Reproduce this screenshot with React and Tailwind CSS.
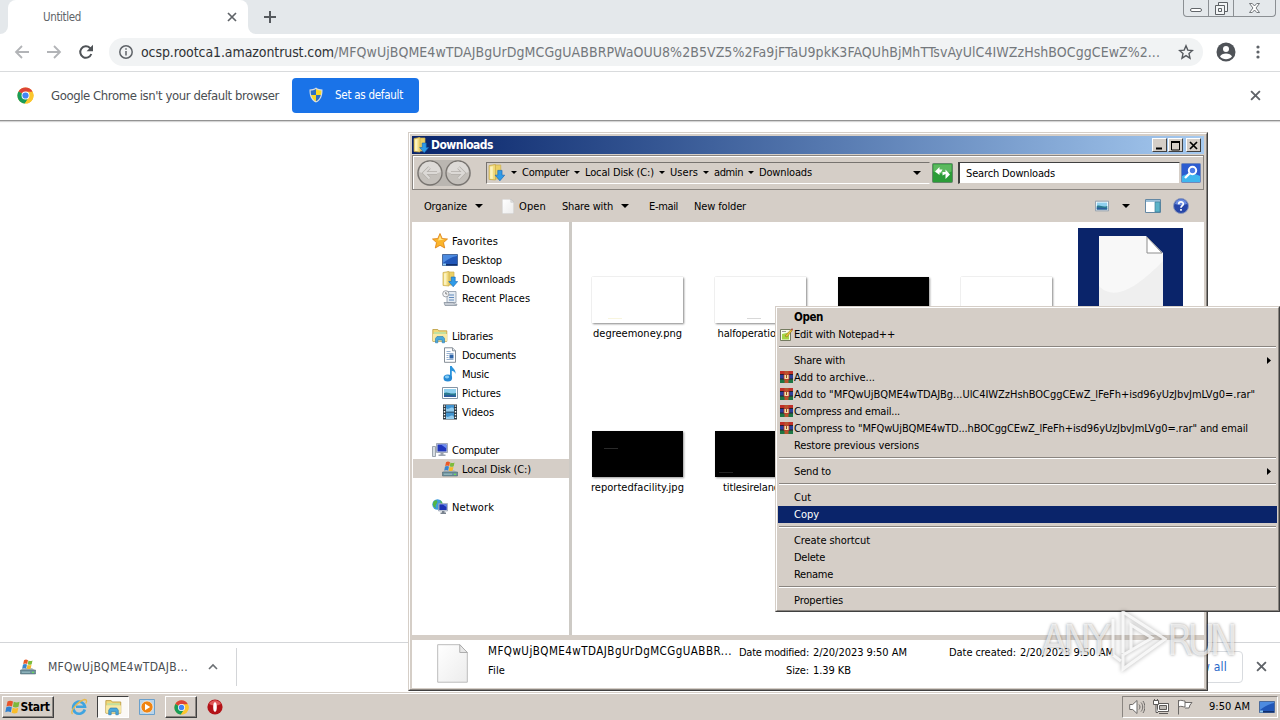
import React, { useLayoutEffect, useRef, useState } from 'react';
import clsx from 'clsx';

// Text that keeps a fixed width: the spare room is spread over the letters
const Label = ({ w, className, children }) => {
  const ref = useRef(null);
  const [spacing, setSpacing] = useState(0);

  useLayoutEffect(() => {
    const range = document.createRange();
    range.selectNodeContents(ref.current);
    const natural = range.getBoundingClientRect().width;
    setSpacing((w - natural) / String(children).length);
  }, []);

  return (
    <span
      ref={ref}
      className={clsx('block shrink-0 whitespace-nowrap', className)}
      style={{ letterSpacing: spacing, width: w }}
    >
      {children}
    </span>
  );
};

const CloseIcon = ({ className }) => (
  <svg viewBox="0 0 10 10" className={className}>
    <path d="M1 1l8 8M9 1L1 9" stroke="#5f6368" strokeWidth="1.7" fill="none" />
  </svg>
);

const ChromeIcon = ({ className }) => (
  <svg viewBox="0 0 18 18" className={className}>
    <circle cx="9" cy="9" r="8.5" fill="#fbc62d" />
    <path d="M9 9L1.6 4.7A8.5 8.5 0 0 1 16.4 4.8z" fill="#dc4437" />
    <path d="M9 9L1.6 4.7A8.5 8.5 0 0 0 8.3 17.5L12.5 11z" fill="#189c58" />
    <path d="M9 5h7.5A8.5 8.5 0 0 1 8.4 17.5L12.5 11z" fill="#fbc62d" />
    <circle cx="9" cy="9" r="4.2" fill="#fff" />
    <circle cx="9" cy="9" r="3.3" fill="#4285f4" />
  </svg>
);

const ShieldIcon = () => (
  <svg viewBox="0 0 16 16" className="size-4">
    <path d="M8 .5C6 2 4 2.4 1.5 2.4 1.3 8.5 3 13 8 15.6 13 13 14.7 8.5 14.5 2.4 12 2.4 10 2 8 .5z" fill="#d7dde2" />
    <path d="M8 2C6 3 4.5 3.5 2.7 3.5c0 1.800 0 3 .5 4.500H8z" fill="#2c6fc4" />
    <path d="M8 2c2 1 3.500 1.500 5.300 1.500 0 1.800 0 3-.5 4.500H8z" fill="#f9d825" />
    <path d="M3.200 8H8v6.300C5.500 13 4 11 3.200 8z" fill="#f9d825" />
    <path d="M12.800 8H8v6.300c2.500-1.300 4-3.300 4.800-6.300z" fill="#2c6fc4" />
  </svg>
);

const FolderDownIcon = ({ className }) => (
  <svg viewBox="0 0 16 16" className={className}>
    <path d="M5 1h7v13H5z" fill="#ecd064" stroke="#cdb050" strokeWidth=".7" />
    <path d="M1 1.500l6-1v14.500l-6-.5z" fill="#f2db7c" stroke="#c8a94a" strokeWidth=".7" />
    <path d="M2 2.500l2.500-.5v12l-2.500-.2z" fill="#fbf2bd" />
    <path d="M9.200 6h4v4.500h2.500L11.200 15.800 6.700 10.500h2.500z" fill="#2f9be8" stroke="#1667b5" strokeWidth=".6" />
  </svg>
);

const StarIcon = () => (
  <svg viewBox="0 0 16 16" className="size-4">
    <path d="M8 .5l2.200 5 5.300.5-4 3.600 1.200 5.400L8 12.300 3.300 15l1.200-5.400-4-3.600 5.300-.5z" fill="#fbb52b" stroke="#dc7d12" strokeWidth=".8" />
    <path d="M8 2.500l1.400 3.600 3 .4-6.400 1z" fill="#ffe58a" />
  </svg>
);

const DesktopIcon = ({ className = 'size-4' }) => (
  <svg viewBox="0 0 16 16" className={className}>
    <path d="M.5 2.500h15v11H.5z" fill="#2157b8" stroke="#4a6a9c" />
    <path d="M1 3h14v1C9 5 5 8 1 11z" fill="#4d8be0" />
    <path d="M1 12h14v1.500H1z" fill="#0f2f6e" />
    <path d="M1 11.500h3v2H1z" fill="#8cc8f0" />
  </svg>
);

const RecentIcon = () => (
  <svg viewBox="0 0 16 16" className="size-4">
    <path d="M5 1.500h9v11H5z" fill="#e4ebf2" stroke="#8c98a6" strokeWidth=".8" />
    <path d="M2 12.500h9.500l1 1.500 2.500.2-.5 1.300H3z" fill="#c6ccd4" stroke="#808a96" strokeWidth=".7" />
    <path d="M7 5h5M7 7.500h5M7 10h5" stroke="#5f88bb" />
    <circle cx="3.800" cy="3.800" r="3.100" fill="#f5f6f8" stroke="#8c8f96" strokeWidth=".8" />
    <path d="M3.800 2v2h1.500" stroke="#555" strokeWidth=".7" fill="none" />
  </svg>
);

const LibrariesIcon = ({ className = 'size-4' }) => (
  <svg viewBox="0 0 16 16" className={className}>
    <path d="M.8 1.500h5l1 1.300h8v10.500H.8z" fill="#f1d878" stroke="#b99a3d" strokeWidth=".8" />
    <path d="M2 4h12v2H2z" fill="#c3e0a0" />
    <path d="M1 6h14v7H1z" fill="#f8e9a4" />
    <path d="M3.500 14.800V10.500l1.500-2h6l1.500 2v4.300h-2.300V12H5.800v2.800z" fill="#49a8dc" stroke="#2578ae" strokeWidth=".6" />
  </svg>
);

const DocumentsIcon = () => (
  <svg viewBox="0 0 16 16" className="size-4">
    <path d="M2.500.8h8l3 3v11.500h-11z" fill="#fff" stroke="#77808a" strokeWidth=".9" />
    <path d="M10.500.8v3h3" fill="#dde3ea" stroke="#77808a" strokeWidth=".8" />
    <path d="M4.500 4.500h4M4.500 6.500h7M4.500 8.500h2M4.500 10.500h2M4.500 12.500h7" stroke="#7a9cc4" strokeWidth=".8" />
    <path d="M7.500 7.500h4v4h-4z" fill="#2f64a8" />
  </svg>
);

const MusicIcon = () => (
  <svg viewBox="0 0 16 16" className="size-4">
    <path d="M8 0h1.800c.3 2.500 4.300 3 3.700 8-.6-2-1.700-2.800-3.700-3.200v7.500H8z" fill="#2b94dc" />
    <ellipse cx="5.800" cy="12" rx="4.300" ry="3.500" fill="#2689d4" />
    <ellipse cx="5" cy="11" rx="2.200" ry="1.400" fill="#85ccf5" />
  </svg>
);

const PictureIcon = ({ className = 'size-4' }) => (
  <svg viewBox="0 0 16 16" className={className}>
    <path d="M.5 2.500h15v11H.5z" fill="#fff" stroke="#8495a5" />
    <path d="M2 4h12v8H2z" fill="#8fd0ee" />
    <path d="M2 8c4-2 6 2 12 0v4H2z" fill="#2a7b8f" />
    <path d="M2 9.800c4 .5 8-.5 12 1V12H2z" fill="#2c5c9c" />
  </svg>
);

const VideosIcon = () => (
  <svg viewBox="0 0 16 16" className="size-4">
    <path d="M1 .5h14v15H1z" fill="#2c3942" />
    <path d="M4 1h8v6.500H4zM4 8.500h8V15H4z" fill="#4093cf" />
    <path d="M4 4c3 3 5-3 8 1v2.500H4zM4 12c3 3 5-3 8 1v2H4z" fill="#95cdee" />
    <path d="M2.500 1.500v14M13.500 1.500v14" stroke="#fff" strokeWidth="1.400" strokeDasharray="1.300 1.500" />
  </svg>
);

const ComputerIcon = () => (
  <svg viewBox="0 0 16 16" className="size-4">
    <path d="M.5 4.500h3v10h-3z" fill="#d7dde2" stroke="#89929c" strokeWidth=".8" />
    <path d="M4.500 1.500h11v9h-11z" fill="#d6dbe4" stroke="#9098a8" strokeWidth=".8" />
    <path d="M5.500 2.500h9v7h-9z" fill="#1f36bd" />
    <path d="M9 2.500h5.500v4z" fill="#6d8df0" />
    <path d="M8.500 10.500h3v2h2v1.500h-7v-1.500h2z" fill="#9aa2ae" />
  </svg>
);

const DiskIcon = ({ className = 'size-4' }) => (
  <svg viewBox="0 0 16 16" className={className}>
    <path d="M2.500 9h9.500l3.500 3H.5z" fill="#b5bcc2" />
    <path d="M.5 11h15v4H.5z" fill="#6f939e" stroke="#3e5963" strokeWidth=".5" />
    <path d="M2 13.200h8" stroke="#a6cbd2" strokeWidth=".8" />
    <path d="M12 12.700h2v1.300h-2z" fill="#6adf58" />
    <path d="M4 1.200c1.500-.9 2.700-.7 4 0L7.200 5c-1.300-.7-2.500-.8-4 0z" fill="#ea5a27" />
    <path d="M8.500 1.400c1.400.7 2.500.7 4 0l-.8 3.800c-1.500.8-2.600.7-4 0z" fill="#7dbb3c" />
    <path d="M3 5.500c1.500-.8 2.700-.7 4 0l-.8 4c-1.300-.8-2.500-.8-4 0z" fill="#3886cf" />
    <path d="M7.500 5.700c1.400.7 2.500.7 4 0l-.8 3.800c-1.500.8-2.600.7-4 0z" fill="#f7b92c" />
  </svg>
);

const NetworkIcon = () => (
  <svg viewBox="0 0 16 16" className="size-4">
    <circle cx="5.500" cy="5.500" r="5.200" fill="#3d9bdc" />
    <path d="M2 2c3-2 4 0 3 2S3 6 4 9C1 8 0 5 2 2zM8 1c3 2 3 5 1 4z" fill="#53b545" />
    <path d="M6.500 4.500h9v7.500h-9z" fill="#cfd6e2" stroke="#8892a6" strokeWidth=".6" />
    <path d="M7.300 5.300h7.400v5.700H7.300z" fill="#1c33b4" />
    <path d="M10.500 5.300h4.200v3z" fill="#6383e8" />
    <path d="M10 12h2.500v1.500H14V15H8.500v-1.500H10z" fill="#78828e" />
  </svg>
);

const PageIcon = ({ className }) => (
  <svg viewBox="0 0 32 40" preserveAspectRatio="none" className={className}>
    <defs>
      <linearGradient id="page" x1="0" y1="0" x2="1" y2="1">
        <stop offset="0" stopColor="#fff" />
        <stop offset="1" stopColor="#ececec" />
      </linearGradient>
    </defs>
    <path d="M.7.7h22.800l7.800 8v30.500H.7z" fill="url(#page)" stroke="#bbb" />
    <path d="M23.500.7v8h7.800z" fill="#e8e8e8" stroke="#aaa" />
  </svg>
);

// Large variant used for the thumbnail, with the corner folded in
const LargePageIcon = () => (
  <svg viewBox="0 0 66 87" className="h-[87px] w-[66px]">
    <path d="M1 0h47l17 17v70H1z" fill="#f8f8f8" />
    <path d="M1 50C20 70 50 40 65 25v62H1z" fill="#efefef" />
    <path d="M49 1l15 16H49z" fill="#fff" stroke="#8d8d8d" />
  </svg>
);

const RarIcon = () => (
  <svg viewBox="0 0 13 12" className="-mt-px h-3 w-[13px]">
    <path d="M0 0h13v4H0z" fill="#c03028" />
    <path d="M0 4h13v4H0z" fill="#2b3e98" />
    <path d="M0 8h13v4H0z" fill="#1d7644" />
    <path d="M0 3.500h13M0 8h13" stroke="#24222e" />
    <path d="M4.500 0h4v12h-4z" fill="#b8542c" />
    <path d="M4 3.500h5v5H4z" fill="#f3dfa9" stroke="#b42b22" strokeWidth=".8" />
    <path d="M6.500 4v3" stroke="#93511b" />
  </svg>
);

const NotepadIcon = () => (
  <svg viewBox="0 0 13 13" className="size-[13px]">
    <path d="M.5 1.500h10v11H.5z" fill="#f8fbec" stroke="#747b60" />
    <path d="M2 6l7-1.500v7H2z" fill="#a6d545" />
    <path d="M2 3.500h4" stroke="#999" />
    <path d="M5 8l6-6.500 1.300 1L7 9z" fill="#e9c43b" stroke="#87661a" strokeWidth=".5" />
    <path d="M11 1.500l1-1.200 1 1-.9 1.200z" fill="#a5302a" />
  </svg>
);

const WindowsFlag = () => (
  <svg viewBox="0 0 16 16" className="size-4">
    <path d="M2.500 2.500C4.500 1.200 6 1.500 8 2.500L7 7.500c-2-1-3.500-1-5.500 0z" fill="#e8542a" />
    <path d="M8.800 2.800c2 1 3.700 1 5.700 0l-1 5c-2 1-3.700 1-5.600 0z" fill="#7cb83c" />
    <path d="M1.300 8.300c2-1 3.500-1 5.500 0l-1 5c-2-1-3.500-1-5.500 0z" fill="#2f80d0" />
    <path d="M7.700 8.700c2 1 3.600 1 5.600 0l-1 5c-2 1-3.700 1-5.600 0z" fill="#f9bd2b" />
  </svg>
);

const Caret = ({ className }) => (
  <svg viewBox="0 0 8 4" className={clsx('shrink-0', className)}>
    <path d="M0 0h8L4 4z" />
  </svg>
);

const BrowserTop = () => (
  <header className="shrink-0">
    <div className="flex h-[34px] items-start bg-[#e4e8eb]">
      <div className="flex h-[34px] w-2 shrink-0 items-end bg-white">
        <div className="h-full w-full rounded-br-lg bg-[#e4e8eb]" />
      </div>
      <div className="flex h-[34px] w-[240px] items-center rounded-t-lg bg-white pl-[35px]">
        <Label w={38} className="text-[11.5px] text-[#606468]">Untitled</Label>
        <CloseIcon className="ml-[146px] size-[10px]" />
      </div>
      <div className="flex h-[34px] w-2 shrink-0 bg-white">
        <div className="h-full w-full rounded-bl-lg bg-[#e4e8eb]" />
      </div>
      <svg viewBox="0 0 12 12" className="ml-2 mt-[11px] size-3">
        <path d="M6 0v12M0 6h12" stroke="#55595e" strokeWidth="2" />
      </svg>
      <div className="ml-auto mr-1 flex h-[17px] w-[93px] rounded-b-[4px] border border-t-0 border-[#8b8f93]">
        <div className="flex w-[25px] items-center justify-center border-r border-[#8b8f93] pt-1">
          <div className="h-1 w-3 rounded-[2px] border border-[#62666a] bg-white" />
        </div>
        <div className="flex w-[25px] items-center justify-center border-r border-[#8b8f93]">
          <svg viewBox="0 0 13 13" className="size-[13px]" fill="#f3f5f6" stroke="#5d6165">
            <path d="M3.500.5h9v9h-9z" />
            <path d="M.5 3.500h9v9h-9zM3.500 6.500h3v3h-3z" />
          </svg>
        </div>
        <div className="flex flex-1 items-center justify-center">
          <svg viewBox="0 0 12 11" className="h-[10px] w-[11px]">
            <path d="M.5.5h3L6 3.300 8.500.5h3L7.700 5.500l3.800 5h-3L6 7.700 3.500 10.500h-3l3.800-5z" fill="#fff" stroke="#65696d" />
          </svg>
        </div>
      </div>
    </div>
    <div className="flex h-[38px] items-center border-b border-[#d9dbdd] bg-white pb-[1px]">
      <svg viewBox="0 0 16 14" className="ml-[14px] h-[14px] w-4" fill="none" stroke="#b2b4b7" strokeWidth="1.8">
        <path d="M15 7H2M8 1L2 7l6 6" />
      </svg>
      <svg viewBox="0 0 16 14" className="ml-4 h-[14px] w-4" fill="none" stroke="#b2b4b7" strokeWidth="1.8">
        <path d="M1 7h13M8 1l6 6-6 6" />
      </svg>
      <svg viewBox="0 0 16 16" className="ml-4 size-4">
        <path d="M13.300 10A5.700 5.700 0 1 1 12 4l1.500 1.500" fill="none" stroke="#4f5357" strokeWidth="2" />
        <path d="M15 .8v6.400H8.600z" fill="#4f5357" />
      </svg>
      <div className="ml-[15px] flex h-7 w-[1094px] items-center rounded-full bg-[#f1f3f4]">
        <svg viewBox="0 0 14 14" className="ml-[10px] size-[14px]" fill="none" stroke="#5f6368" strokeWidth="1.500">
          <circle cx="7" cy="7" r="6.200" />
          <path d="M7 6v4.500M7 3.300v1.500" />
        </svg>
        <Label w={193} className="ml-2 text-[14px] text-[#2f3235]">ocsp.rootca1.amazontrust.com</Label>
        <Label w={826} className="text-[14px] text-[#74787c]">
          /MFQwUjBQME4wTDAJBgUrDgMCGgUABBRPWaOUU8%2B5VZ5%2Fa9jFTaU9pkK3FAQUhBjMhTTsvAyUlC4IWZzHshBOCggCEwZ%2...
        </Label>
        <svg viewBox="0 0 16 16" className="ml-[18px] size-4">
          <path d="M8 1.800l1.800 4.300 4.700.4-3.500 3.100 1 4.600L8 11.700 4 14.200l1-4.600L1.500 6.500l4.700-.4z" fill="none" stroke="#55595e" strokeWidth="1.400" />
        </svg>
      </div>
      <svg viewBox="0 0 20 20" className="ml-[13px] size-5">
        <circle cx="10" cy="10" r="9.500" fill="#4f5358" />
        <circle cx="10" cy="7" r="3" fill="#fff" />
        <path d="M4 14.500c1.500-4 10.500-4 12 0-3 3.500-9 3.500-12 0z" fill="#fff" />
      </svg>
      <svg viewBox="0 0 4 14" className="ml-[20px] h-[14px] w-1" fill="#5f6368">
        <circle cx="2" cy="2" r="1.600" />
        <circle cx="2" cy="7" r="1.600" />
        <circle cx="2" cy="12" r="1.600" />
      </svg>
    </div>
    <div className="flex h-[49px] items-center border-b border-[#939393] bg-white pb-px shadow-[0_1px_1px_#d5d5d5]">
      <ChromeIcon className="ml-[17px] size-[17px]" />
      <Label w={228} className="ml-[17px] text-[13px] text-[#4a4e52]">Google Chrome isn't your default browser</Label>
      <button className="-mt-px ml-[13px] flex h-[35px] w-[127px] items-center rounded-[4px] bg-[#1a73e8] pl-4">
        <ShieldIcon />
        <Label w={68} className="ml-[11px] text-[11.5px] text-white">Set as default</Label>
      </button>
      <CloseIcon className="ml-auto mr-[19px] size-[11px]" />
    </div>
  </header>
);

const DownloadShelf = () => (
  <div className="flex h-[50px] shrink-0 items-center border-t border-[#d3d5d8] bg-white pb-[2px]">
    <DiskIcon className="ml-5 size-4" />
    <Label w={140} className="ml-3 text-[12px] text-[#4a4e52]">MFQwUjBQME4wTDAJB...</Label>
    <svg viewBox="0 0 10 7" className="ml-5 h-[7px] w-[10px]">
      <path d="M1 6l4-4 4 4" fill="none" stroke="#6b6f73" strokeWidth="1.600" />
    </svg>
    <div className="ml-[18px] h-[38px] w-px bg-[#d3d5d8]" />
    <button className="ml-auto flex h-8 w-[83px] items-center justify-end rounded-[4px] border border-[#d8dbdf] pr-[15px]">
      <Label w={47} className="text-[12px] text-[#2867c8]">Show all</Label>
    </button>
    <CloseIcon className="ml-[13px] mr-[13px] size-[11px]" />
  </div>
);

const taskButton = 'flex h-[22px] items-center justify-center border bg-[#d5cec7]';
const raised = 'border-t-white border-l-white border-r-[#404040] border-b-[#404040] shadow-[inset_-1px_-1px_#8a8580]';

const Taskbar = () => (
  <footer className="flex h-7 shrink-0 items-center border-t border-[#d5cec7] bg-[#d5cec7] pt-px shadow-[inset_0_1px_#fff]">
    <button className={clsx(taskButton, raised, 'ml-[2px] w-[52px] pr-[2px]')}>
      <WindowsFlag />
      <Label w={29} className="text-[12px] font-bold">Start</Label>
    </button>
    <svg viewBox="0 0 18 18" className="ml-4 size-[18px]">
      <path d="M14.800 11.500A6 6 0 1 1 15 8.800H6" fill="none" stroke="#3fa4e0" strokeWidth="2.600" />
      <path d="M2.500 16c-3-3 6-13 12-14.500 3 0 2.200 2.500 1.200 4" fill="none" stroke="#e8b94a" strokeWidth="1.300" />
    </svg>
    <button className="ml-[9px] flex h-[22px] w-8 items-center justify-center border border-t-[#404040] border-l-[#404040] border-r-white border-b-white bg-[#fbf9f6]">
      <LibrariesIcon className="size-[17px]" />
    </button>
    <svg viewBox="0 0 16 16" className="ml-[10px] size-4">
      <path d="M.5.5h15v15H.5z" fill="#b9d4ea" stroke="#6aa0cc" />
      <circle cx="8" cy="8" r="6" fill="#ef8413" stroke="#fff" strokeWidth=".6" />
      <path d="M6 4.800v6.400L11.200 8z" fill="#fff" />
    </svg>
    <button className={clsx(taskButton, raised, 'ml-[10px] w-8')}>
      <ChromeIcon className="size-[15px]" />
    </button>
    <svg viewBox="0 0 16 16" className="ml-[10px] size-4">
      <circle cx="8" cy="8" r="7.600" fill="#b31217" />
      <path d="M2 5c3-5 9-5 12 0-4 2-8 2-12 0z" fill="#e0595a" />
      <ellipse cx="8" cy="8" rx="1.800" ry="4.800" fill="#fff" />
    </svg>
    <div className="ml-auto mr-[2px] flex h-[22px] w-[156px] items-center border border-t-[#8a8580] border-l-[#8a8580] border-r-white border-b-white">
      <svg viewBox="0 0 16 16" className="ml-[6px] size-4" fill="none" stroke="#6d6a68">
        <path d="M.7 5.500h3L8 1.500v13L3.700 10.500h-3z" fill="#fff" />
        <path d="M10 5.500c1.300 1.500 1.300 3.500 0 5M12 3.500c2.300 2.500 2.300 6.500 0 9M14 2c2.500 4 2.500 8 0 12" />
      </svg>
      <svg viewBox="0 0 16 16" className="ml-2 size-4" fill="#fff" stroke="#5d5a58">
        <path d="M4.500 4.500h11v8h-11z" />
        <path d="M6.500 6.500h7v4h-7z" fill="#bdb9b4" />
        <path d="M6 14.500h9M3 5.500v8h2" />
        <path d="M.5 1.500h5v4h-5z" />
        <path d="M1.500 0v2M4.500 0v2" />
      </svg>
      <svg viewBox="0 0 16 16" className="ml-2 size-4" stroke="#6d6a68" fill="#fff">
        <path d="M1.500 1v14.500M1.500 2c3-1.500 4 0 6.500 0v6c-2.500 0-3.500-1.500-6.500 0M8 3.500h7L13 6l-1 3H8" />
      </svg>
      <Label w={41} className="ml-4">9:50 AM</Label>
      <DesktopIcon className="ml-[9px] size-4" />
    </div>
  </footer>
);

const CaptionButton = ({ className, children }) => (
  <button
    className={clsx(
      'flex h-[14px] w-[15px] items-center justify-center border border-t-white border-l-white border-r-[#404040] border-b-[#404040] bg-[#d5cec7]',
      className
    )}
  >
    <svg viewBox="0 0 11 11" className="size-[11px]" fill="none" stroke="#000">{children}</svg>
  </button>
);

const crumbs = [
  { text: 'Computer', w: 47 },
  { text: 'Local Disk (C:)', w: 69 },
  { text: 'Users', w: 28 },
  { text: 'admin', w: 29 },
  { text: 'Downloads', w: 53 },
];

const RoundArrow = ({ flip }) => (
  <svg viewBox="0 0 26 26" className={clsx('size-[26px]', flip && '-scale-x-100')}>
    <circle cx="13" cy="13" r="12" fill="#c4c0bb" stroke="#77736f" strokeWidth="1.300" />
    <path d="M2.500 12a10.500 10.500 0 0 1 21 0c-6 3-15 3-21 0z" fill="#dddad7" />
    <path d="M20 13H7.500M12.500 7.500L7 13l5.500 5.500" fill="none" stroke="#b3afaa" strokeWidth="3.400" />
    <path d="M20 13H7.500M12.500 7.500L7 13l5.500 5.500" fill="none" stroke="#dcd9d6" strokeWidth="2" />
  </svg>
);

const AddressBar = () => (
  <div className="mt-px flex h-[35px] items-center border border-[#8a8580] pl-[4px] shadow-[inset_1px_1px_#fff]">
    <div className="flex rounded-full bg-[#bab6b1]">
      <RoundArrow />
      <div className="w-[2px]" />
      <RoundArrow flip />
    </div>
    <div className="ml-[15px] flex h-[22px] w-[444px] items-center border border-t-[#77736f] border-l-[#77736f] border-r-[#d5cec7] border-b-white">
      <FolderDownIcon className="ml-px mr-px size-[17px] shrink-0" />
      {crumbs.map((crumb) => (
        <React.Fragment key={crumb.text}>
          <Caret className="ml-[5px] h-[3px] w-[6px]" />
          <Label w={crumb.w} className="ml-[5px]">{crumb.text}</Label>
        </React.Fragment>
      ))}
      <Caret className="ml-auto mr-2 h-1 w-2" />
    </div>
    <svg viewBox="0 0 21 20" className="ml-[2px] h-5 w-[21px]">
      <rect x=".5" y=".5" width="20" height="19" rx="1" fill="#2c9c38" stroke="#65856a" />
      <path d="M1.500 1.500h18v7c-6 3-12 3-18 0z" fill="#5cb95e" />
      <path d="M3 8.500l4.500-4.500v2.500h3L8.800 9.500H7.500V12zM18 11.500l-4.500-5v2.500h-3v3.500L13.500 11v5z" fill="#fff" />
    </svg>
    <div className="ml-[5px] flex h-[22px] w-[222px] items-center border border-t-[#404040] border-l-2 border-l-[#404040] border-r-[#d5cec7] border-b-[#d5cec7] bg-white pl-[6px]">
      <Label w={89} className="pt-0.5">Search Downloads</Label>
    </div>
    <svg viewBox="0 0 20 20" className="ml-[1px] size-5">
      <rect x=".5" y=".5" width="19" height="19" rx="1" fill="#2c5cd0" stroke="#7187b8" />
      <path d="M1 13c6-3 12-3 18 0v6H1z" fill="#3fb6ee" />
      <circle cx="11.500" cy="7.500" r="3.700" fill="#4b7be6" stroke="#fff" strokeWidth="2" />
      <path d="M8.500 10.500L4 15" stroke="#fff" strokeWidth="2.400" />
    </svg>
  </div>
);

const ExplorerToolbar = () => (
  <div className="flex h-8 items-center pl-3">
    <Label w={43} className="pt-0.5">Organize</Label>
    <Caret className="ml-2 h-1 w-2" />
    <PageIcon className="ml-[19px] h-[15px] w-3" />
    <Label w={27} className="ml-[5px] pt-0.5">Open</Label>
    <Label w={51} className="ml-4 pt-0.5">Share with</Label>
    <Caret className="ml-2 h-1 w-2" />
    <Label w={29} className="ml-[20px] pt-0.5">E-mail</Label>
    <Label w={52} className="ml-4 pt-0.5">New folder</Label>
    <PictureIcon className="ml-auto size-[14px]" />
    <Caret className="ml-[13px] h-1 w-2" />
    <svg viewBox="0 0 16 14" className="ml-[15px] h-[14px] w-4">
      <path d="M.5.5h15v13H.5z" fill="#fff" stroke="#6488a4" />
      <path d="M1 2h14" stroke="#9cc0d8" strokeWidth="2" />
      <path d="M10 3h5v10h-5z" fill="#5bb3c8" stroke="#3d7e9a" strokeWidth=".7" />
    </svg>
    <svg viewBox="0 0 16 16" className="ml-3 mr-[15px] size-4">
      <circle cx="8" cy="8" r="7.500" fill="#2746a8" stroke="#8b98bb" />
      <path d="M2 6a6.200 6.200 0 0 1 12 0c-4 1.500-8 1.500-12 0z" fill="#6c8de0" />
      <path d="M5.700 6.200c0-3 4.600-3 4.600-.2C10.300 8 8 7.600 8 9.700M8 11v1.800" fill="none" stroke="#fff" strokeWidth="1.700" />
    </svg>
  </div>
);

const navItems = [
  { text: 'Favorites', w: 46, icon: StarIcon, root: true },
  { text: 'Desktop', w: 40, icon: DesktopIcon },
  { text: 'Downloads', w: 53, icon: () => <FolderDownIcon className="size-4" /> },
  { text: 'Recent Places', w: 68, icon: RecentIcon },
  null,
  { text: 'Libraries', w: 41, icon: LibrariesIcon, root: true },
  { text: 'Documents', w: 54, icon: DocumentsIcon },
  { text: 'Music', w: 27, icon: MusicIcon },
  { text: 'Pictures', w: 39, icon: PictureIcon },
  { text: 'Videos', w: 32, icon: VideosIcon },
  null,
  { text: 'Computer', w: 47, icon: ComputerIcon, root: true },
  { text: 'Local Disk (C:)', w: 69, icon: DiskIcon, selected: true },
  null,
  { text: 'Network', w: 42, icon: NetworkIcon, root: true },
];

const NavPane = () => (
  <nav className="w-[157px] shrink-0 bg-white pt-[9px] pl-px">
    {navItems.map((item, i) => {
      if (!item) return <div key={i} className="h-[19px]" />;
      const Icon = item.icon;
      return (
        <div
          key={i}
          className={clsx(
            'flex h-[19px] items-center gap-1',
            item.root ? 'pl-[19px]' : 'pl-[29px]',
            item.selected && 'bg-[#d5cec7]'
          )}
        >
          <Icon />
          <Label w={item.w} className="pt-0.5">{item.text}</Label>
        </div>
      );
    })}
  </nav>
);

const files = [
  { name: 'degreemoney.png', w: 89, mark: 'ml-4 bg-[#f8f5df]' },
  { name: 'halfoperation.png', w: 86, mark: 'ml-8 bg-[#d8d8d8]' },
  { dark: true },
  {},
  { page: true },
  { name: 'reportedfacility.jpg', w: 93, dark: true, mark: 'ml-3 mb-[28px] bg-[#2a2a2a]' },
  { name: 'titlesireland.jpg', w: 75, dark: true, mark: 'ml-1 bg-[#222]' },
];

const FileItem = ({ file }) => (
  <div className={clsx('flex h-[136px] w-[105px] flex-col items-center', file.page && 'ml-px bg-[#0a246a]')}>
    <div className="flex h-[95px] items-end">
      {file.page ? (
        <LargePageIcon />
      ) : (
        <div
          className={clsx(
            'flex h-[46px] w-[91px] items-end',
            file.dark ? 'bg-black shadow-[1px_1px_2px_#999]' : 'bg-white shadow-[1px_1px_2px_#888,0_0_1px_#ccc]'
          )}
        >
          {file.mark && <div className={clsx('h-px w-3.5', file.mark.includes('mb-') ? '' : 'mb-1', file.mark)} />}
        </div>
      )}
    </div>
    {file.name && <Label w={file.w} className="mt-1 leading-[14px]">{file.name}</Label>}
  </div>
);

const DetailsPane = () => (
  <div className="flex h-12 bg-white pt-1 pl-[25px]">
    <PageIcon className="h-[39px] w-[31px]" />
    <div className="ml-5 flex w-[251px] flex-col gap-1 leading-[15px]">
      <Label w={244} className="text-[11.5px]">MFQwUjBQME4wTDAJBgUrDgMCGgUABBR...</Label>
      <Label w={17}>File</Label>
    </div>
    <div className="grid h-[34px] grid-cols-[70px_94px] content-start justify-items-end gap-x-1 gap-y-[3px] pt-px leading-[15px]">
      <Label w={70}>Date modified:</Label>
      <Label w={94}>2/20/2023 9:50 AM</Label>
      <Label w={23}>Size:</Label>
      <Label w={38} className="justify-self-start">1.39 KB</Label>
    </div>
    <div className="ml-[42px] flex gap-1 pt-px leading-[15px]">
      <Label w={67}>Date created:</Label>
      <Label w={94}>2/20/2023 9:50 AM</Label>
    </div>
  </div>
);

const ExplorerWindow = () => (
  <section className="absolute left-[408px] top-[132px] h-[559px] w-[800px] border border-t-[#d5cec7] border-l-[#d5cec7] border-r-[#404040] border-b-[#404040] bg-[#d5cec7]">
    <div className="flex h-full flex-col border border-t-white border-l-white border-r-[#8a8580] border-b-[#8a8580] p-[2px] pb-px">
      <div className="flex h-[18px] shrink-0 items-center bg-linear-to-r from-[#0a246a] to-[#a6caf0] pl-px">
        <FolderDownIcon className="size-4" />
        <Label w={62} className="ml-[2px] text-[12px] font-bold text-white">Downloads</Label>
        <CaptionButton className="ml-auto"><path d="M2 8.500h6" strokeWidth="2" /></CaptionButton>
        <CaptionButton className="ml-[1px]"><path d="M1 1.500h9M1.500 1v9h8V1M1 2.500h9" /></CaptionButton>
        <CaptionButton className="ml-[3px] mr-[3px]"><path d="M2 2l7 7M9 2L2 9" strokeWidth="1.700" /></CaptionButton>
      </div>
      <AddressBar />
      <ExplorerToolbar />
      <div className="flex h-[413px] shrink-0">
        <NavPane />
        <div className="w-[3px] bg-[#cdcac5]" />
        <div className="grid flex-1 auto-rows-[136px] grid-cols-[repeat(5,105px)] content-start gap-[18px] bg-white pl-[13px] pt-[6px]">
          {files.map((file, i) => <FileItem key={i} file={file} />)}
        </div>
      </div>
      <div className="h-[5px] shrink-0" />
      <DetailsPane />
    </div>
  </section>
);

const menuItems = [
  { text: 'Open', w: 29, bold: true },
  { text: 'Edit with Notepad++', w: 101, icon: NotepadIcon },
  null,
  { text: 'Share with', w: 51, sub: true },
  { text: 'Add to archive...', w: 81, icon: RarIcon },
  { text: 'Add to "MFQwUjBQME4wTDAJBg...UlC4IWZzHshBOCggCEwZ_lFeFh+isd96yUzJbvJmLVg0=.rar"', w: 461, icon: RarIcon },
  { text: 'Compress and email...', w: 106, icon: RarIcon },
  { text: 'Compress to "MFQwUjBQME4wTD...hBOCggCEwZ_lFeFh+isd96yUzJbvJmLVg0=.rar" and email', w: 454, icon: RarIcon },
  { text: 'Restore previous versions', w: 125 },
  null,
  { text: 'Send to', w: 37, sub: true },
  null,
  { text: 'Cut', w: 17 },
  { text: 'Copy', w: 25, active: true },
  null,
  { text: 'Create shortcut', w: 76 },
  { text: 'Delete', w: 31 },
  { text: 'Rename', w: 39 },
  null,
  { text: 'Properties', w: 49 },
];

const ContextMenu = () => (
  <div className="absolute left-[775px] top-[306px] w-[505px] border border-t-[#d5cec7] border-l-[#d5cec7] border-r-[#404040] border-b-[#404040] bg-[#d5cec7]">
    <div className="border border-t-white border-l-white border-r-[#8a8580] border-b-[#8a8580] p-px">
      {menuItems.map((item, i) => {
        if (!item) {
          return (
            <div key={i} className="h-[9px] px-px pt-[3px]">
              <div className="h-[2px] border-b border-t border-t-[#8a8580] border-b-white" />
            </div>
          );
        }
        const Icon = item.icon;
        return (
          <div key={i} className={clsx('flex h-[17px] items-center', item.active && 'bg-[#0a246a] text-white')}>
            <div className="flex w-4 shrink-0 items-center pl-[2px]">{Icon && <Icon />}</div>
            <Label w={item.w} className={clsx(item.bold && 'pb-0.5 text-[11.5px] font-bold')}>{item.text}</Label>
            {item.sub && (
              <svg viewBox="0 0 4 7" className="ml-auto mr-[6px] h-[7px] w-1">
                <path d="M0 0l4 3.500L0 7z" />
              </svg>
            )}
          </div>
        );
      })}
    </div>
  </div>
);

const Watermark = () => (
  <div className="absolute left-[1041px] top-[609px] flex h-[64px] items-center font-['Liberation_Sans_Narrow','DejaVu_Sans_Condensed',sans-serif] text-[42px] text-white/70 [text-shadow:0_0_3px_#00000066]">
    <Label w={66}>ANY</Label>
    <svg viewBox="0 0 60 64" className="h-16 w-[60px] drop-shadow-[0_0_2px_#00000066]" fill="none" stroke="#fff" strokeOpacity=".8" strokeWidth="3">
      <path d="M16 2v42M16 3l42 27-42 30V46l29-17-21-13v25" />
      <path d="M6 10v36l8 6" />
    </svg>
    <Label w={65}>RUN</Label>
  </div>
);

const App = () => {
  return (
    <div className="relative flex h-[720px] w-[1280px] flex-col overflow-hidden bg-white font-['DejaVu_Sans_Condensed','Noto_Sans',sans-serif] text-[11px] leading-[14px] text-black">
      <BrowserTop />
      <main className="flex-1" />
      <DownloadShelf />
      <Taskbar />
      <ExplorerWindow />
      <ContextMenu />
      <Watermark />
    </div>
  );
};

export default App;
